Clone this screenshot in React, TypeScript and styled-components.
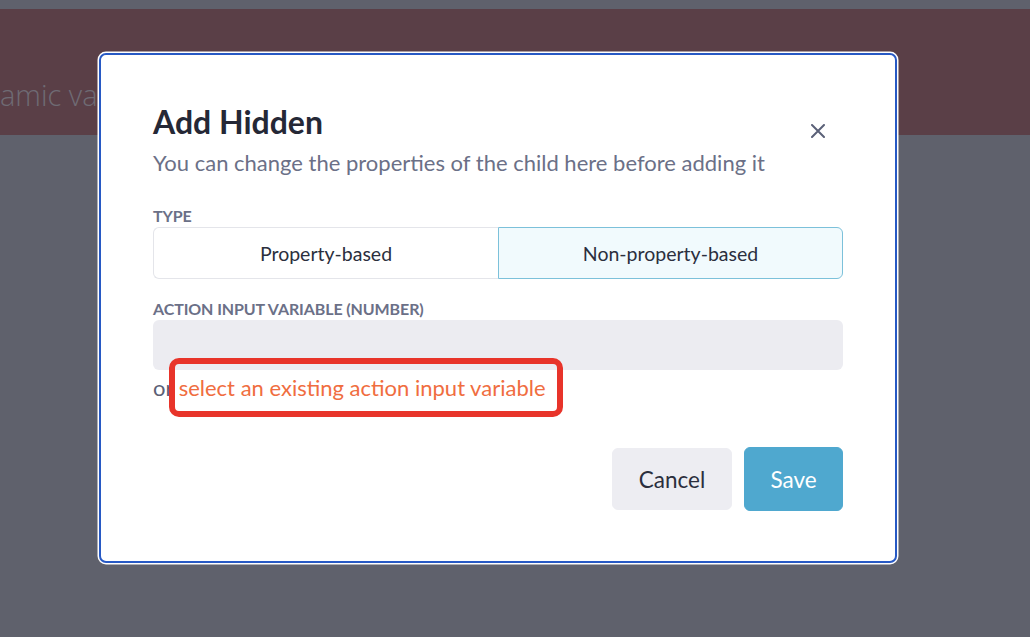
import React from "react";
import styled, { createGlobalStyle } from "styled-components";

const Global = createGlobalStyle`
  html, body { margin: 0; padding: 0; }
  body {
    width: 1030px;
    height: 637px;
    overflow: hidden;
    background: #5f616c;
    font-family: Lato, "Noto Sans", sans-serif;
  }
  #root { height: 100%; }
`;

const Page = styled.div`
  position: relative;
  width: 1030px;
  height: 637px;
  display: flex;
  flex-direction: column;
  background: #5f616c;
  overflow: hidden;
`;

const TopStrip = styled.div`
  height: 9px;
  flex: none;
`;

const Band = styled.div`
  height: 126px;
  flex: none;
  background: #5a3f47;
  display: flex;
  align-items: center;
  padding-top: 44px;
  box-sizing: border-box;
`;

const BandText = styled.span`
  font-family: "Open Sans", Inter, sans-serif;
  font-weight: 300;
  font-size: 29px;
  color: #6f6b74;
  margin-left: 0;
  white-space: nowrap;
`;

const Modal = styled.div`
  position: absolute;
  left: 99px;
  top: 53px;
  width: 798px;
  height: 510px;
  box-sizing: border-box;
  background: #fff;
  border: 2px solid #2759c4;
  border-radius: 7px;
  box-shadow: 0 0 0 1.5px #ffffff;
  padding: 48px 52px 50px 52px;
  display: flex;
  flex-direction: column;
`;

const Header = styled.div`
  display: flex;
  justify-content: space-between;
  align-items: flex-start;
`;

const Title = styled.h2`
  margin: 0;
  font-size: 32px;
  line-height: 38px;
  font-weight: 700;
  color: #252836;
`;

const Subtitle = styled.p`
  margin: 8px 0 0;
  font-size: 22px;
  line-height: 28px;
  color: #6b7087;
`;

const CloseButton = styled.button`
  border: none;
  background: transparent;
  padding: 0;
  margin: 21px 18px 0 0;
  width: 14px;
  height: 14px;
  display: flex;
  cursor: pointer;
`;

const Label = styled.div<{ $gap: number }>`
  margin-top: ${(p) => p.$gap}px;
  font-size: 16px;
  line-height: 18px;
  font-weight: 700;
  color: #6b7087;
  text-transform: uppercase;
  letter-spacing: -0.1px;
`;

const Segmented = styled.div`
  margin-top: 2px;
  display: grid;
  grid-template-columns: 1fr 1fr;
  height: 52px;
`;

const Segment = styled.button<{ $active?: boolean }>`
  font-family: inherit;
  font-size: 19.5px;
  color: #2b2f3d;
  cursor: pointer;
  box-sizing: border-box;
  background: ${(p) => (p.$active ? "#f1fafd" : "#ffffff")};
  border: 1px solid ${(p) => (p.$active ? "#7cc1da" : "#e4e5ea")};
  border-radius: ${(p) => (p.$active ? "0 6px 6px 0" : "6px 0 0 6px")};
  ${(p) => (p.$active ? "" : "border-right: none;")}
`;

const Input = styled.div`
  margin-top: 2px;
  height: 50px;
  border-radius: 6px;
  background: #ececf1;
`;

const OrLine = styled.div`
  position: relative;
  margin-top: 4px;
  font-size: 22px;
  line-height: 28px;
  color: #5c6076;
`;

const OrLink = styled.a`
  color: #f06d40;
  text-decoration: none;
  cursor: pointer;
`;

const Highlight = styled.div`
  position: absolute;
  left: 16px;
  top: -16px;
  width: 394px;
  height: 59px;
  box-sizing: border-box;
  border: 6px solid #e8342a;
  border-radius: 10px;
  pointer-events: none;
`;

const Footer = styled.div`
  margin-top: auto;
  display: flex;
  justify-content: flex-end;
  align-items: center;
  gap: 12px;
`;

const Button = styled.button<{ $primary?: boolean }>`
  font-family: inherit;
  font-size: 22.5px;
  border-radius: 6px;
  cursor: pointer;
  box-sizing: border-box;
  border: 1px solid ${(p) => (p.$primary ? "#4fa8cf" : "#ededf2")};
  background: ${(p) => (p.$primary ? "#4fa8cf" : "#ededf2")};
  color: ${(p) => (p.$primary ? "#ffffff" : "#2b2f3d")};
  height: ${(p) => (p.$primary ? 64 : 62)}px;
  width: ${(p) => (p.$primary ? 99 : 120)}px;
  padding: 0;
`;

export default function App() {
  return (
    <>
      <Global />
      <Page>
        <TopStrip />
        <Band>
          <BandText>amic value</BandText>
        </Band>
        <Modal>
          <Header>
            <div>
              <Title>Add Hidden</Title>
              <Subtitle>
                You can change the properties of the child here before adding it
              </Subtitle>
            </div>
            <CloseButton aria-label="Close">
              <svg width="14" height="14" viewBox="0 0 14 14">
                <path
                  d="M1 1 L13 13 M13 1 L1 13"
                  stroke="#5b6178"
                  strokeWidth="2"
                  strokeLinecap="round"
                />
              </svg>
            </CloseButton>
          </Header>
          <Label $gap={30}>Type</Label>
          <Segmented>
            <Segment>Property-based</Segment>
            <Segment $active>Non-property-based</Segment>
          </Segmented>
          <Label $gap={21}>Action input variable (number)</Label>
          <Input />
          <OrLine>
            or <OrLink>select an existing action input variable</OrLink>
            <Highlight />
          </OrLine>
          <Footer>
            <Button>Cancel</Button>
            <Button $primary>Save</Button>
          </Footer>
        </Modal>
      </Page>
    </>
  );
}
